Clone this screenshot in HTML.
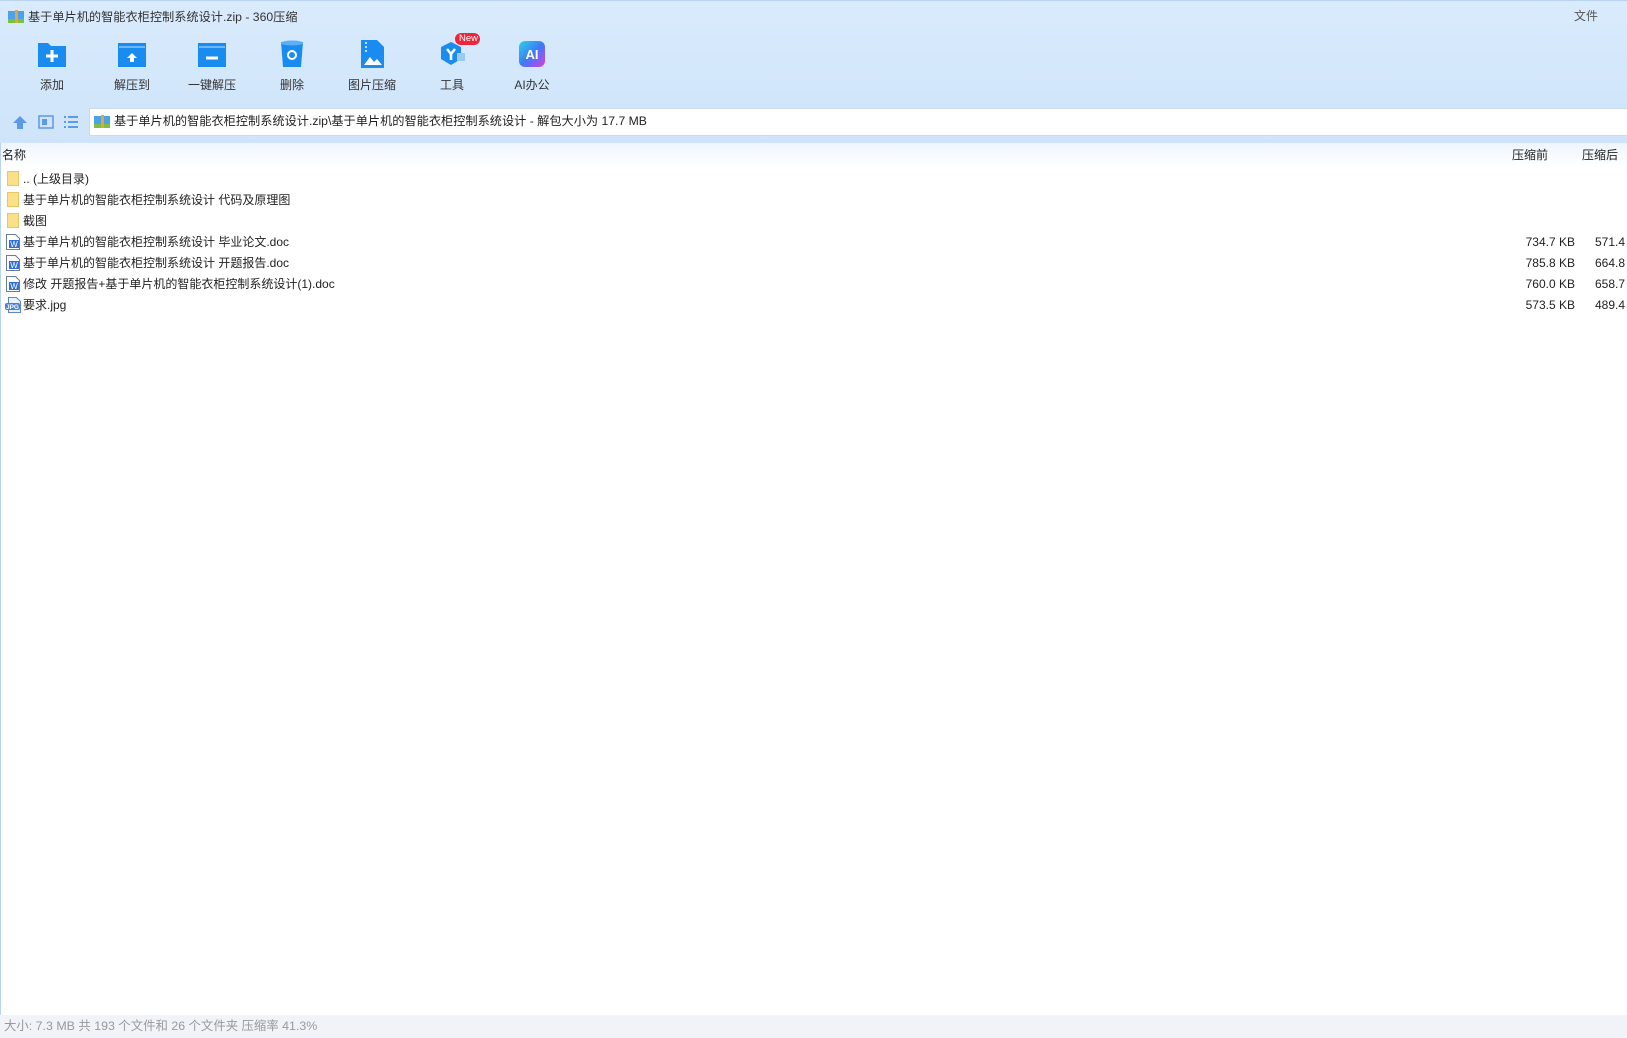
<!DOCTYPE html>
<html><head><meta charset="utf-8"><style>
*{margin:0;padding:0;box-sizing:border-box}
body{width:1627px;height:1038px;overflow:hidden;background:#fff;font-family:"Liberation Sans","Noto Sans CJK SC",sans-serif;font-size:12px;color:#222;position:relative}
.top{position:absolute;left:0;top:0;width:1627px;height:143px;background:linear-gradient(#d9ebfc,#cfe4fa);border-top:1px solid #b8d4f0}
.title{position:absolute;left:28px;top:7px;font-size:12.2px;color:#333;line-height:18px}
.tb{position:absolute;top:38px;width:80px;text-align:center;font-size:12px;color:#333}
.tb svg{display:block;margin:0 auto 7px}
.addr{position:absolute;left:89px;top:107px;right:0;height:28px;background:#fff;border:1px solid #c7dcf2;border-right:none}
.addr span{position:absolute;left:24px;top:-1px;line-height:26px;font-size:12.2px}
.hdr{position:absolute;left:0;top:143px;width:1627px;height:24px;background:linear-gradient(#eef5fd,#fff)}
.hdr div{position:absolute;top:0;line-height:24px;font-size:12px}
.row{position:absolute;left:0;height:21px;width:1627px;line-height:21px}
.row .ic{position:absolute;left:7px;top:2px}
.row .n{position:absolute;left:23px;top:0}
.row .a{position:absolute;right:52px;top:0}
.row .b{position:absolute;left:1595px;top:0}
.status{position:absolute;left:0;top:1015px;width:1627px;height:23px;background:#f1f3f8;color:#999;font-size:12.4px;line-height:23px;padding:0 4px}
.lb{position:absolute;left:0;top:143px;width:1px;height:872px;background:#b8d4f0}
</style></head><body>
<div class="top">
<svg style="position:absolute;left:8px;top:9px" width="16" height="14"><rect x="0" y="1" width="16" height="12" fill="#4aa3e8"/><rect x="0" y="9" width="16" height="4" fill="#7bc043"/><rect x="7" y="0" width="3" height="13" fill="#e8a33a"/></svg>
<div class="title">基于单片机的智能衣柜控制系统设计.zip - 360压缩</div>
<div style="position:absolute;left:1574px;top:6px;font-size:12px;color:#555">文件</div>
<div class="tb" style="left:12px"><svg width="32" height="30"><path d="M2 4h10l3 3h15v21H2z" fill="#1a8cf0"/><path d="M16 11v12M10 17h12" stroke="#fff" stroke-width="3"/></svg>添加</div>
<div class="tb" style="left:92px"><svg width="32" height="30"><path d="M2 4h28v24H2z" fill="#1a8cf0"/><path d="M3 8h26" stroke="#bfe0ff"/><path d="M16 14l-5 5h3v4h4v-4h3z" fill="#fff"/></svg>解压到</div>
<div class="tb" style="left:172px"><svg width="32" height="30"><path d="M2 4h28v24H2z" fill="#1a8cf0"/><path d="M3 8h26" stroke="#bfe0ff"/><path d="M10 19h12" stroke="#fff" stroke-width="3"/></svg>一键解压</div>
<div class="tb" style="left:252px"><svg width="32" height="30"><path d="M5 3h22l-2 25H7z" fill="#1a8cf0"/><ellipse cx="16" cy="4" rx="11" ry="2.5" fill="#5bb0f8"/><circle cx="16" cy="16" r="4" fill="none" stroke="#fff" stroke-width="2"/></svg>删除</div>
<div class="tb" style="left:332px"><svg width="32" height="30"><path d="M5 1h16l7 7v21H5z" fill="#1a8cf0"/><path d="M8 26l6-8 4 5 3-3 5 6z" fill="#fff"/><path d="M10 3v10" stroke="#bfe0ff" stroke-dasharray="2 2" stroke-width="2"/></svg>图片压缩</div>
<div class="tb" style="left:412px"><svg width="34" height="30"><path d="M16 3l10 5v12l-10 6-10-6V8z" fill="#1a8cf0"/><rect x="22" y="14" width="8" height="8" fill="#9ccaf5"/><path d="M12 10l4 5 4-5M16 15v6" stroke="#fff" stroke-width="2.5" fill="none"/></svg>工具</div>
<div style="position:absolute;left:455px;top:32px;background:#f0243a;color:#fff;border-radius:7px;font-size:9.5px;padding:0 4px;height:12px;line-height:12px;width:25px;text-align:center">New</div>
<div class="tb" style="left:492px"><svg width="32" height="30"><defs><linearGradient id="g" x1="0" y1="0" x2="1" y2="1"><stop offset="0" stop-color="#2cd3e6"/><stop offset=".5" stop-color="#3d7bf5"/><stop offset="1" stop-color="#d63ee8"/></linearGradient></defs><rect x="3" y="2" width="26" height="26" rx="6" fill="url(#g)"/><text x="16" y="20" text-anchor="middle" fill="#fff" font-size="13" font-weight="bold" font-family="Liberation Sans">AI</text></svg>AI办公</div>
<svg style="position:absolute;left:12px;top:114px" width="16" height="14"><path d="M8 1l7 7h-4v6H5V8H1z" fill="#5a9ae8"/></svg>
<svg style="position:absolute;left:38px;top:114px" width="16" height="14"><rect x="1" y="1" width="14" height="12" fill="none" stroke="#5a9ae8" stroke-width="1.5"/><rect x="4" y="4" width="5" height="6" fill="#5a9ae8"/></svg>
<svg style="position:absolute;left:63px;top:114px" width="16" height="14"><path d="M1 2h2M1 7h2M1 12h2M5 2h10M5 7h10M5 12h10" stroke="#5a9ae8" stroke-width="2"/></svg>
<div class="addr"><svg style="position:absolute;left:4px;top:6px" width="16" height="14"><rect x="0" y="1" width="16" height="12" fill="#4aa3e8"/><rect x="0" y="9" width="16" height="4" fill="#7bc043"/><rect x="7" y="0" width="3" height="13" fill="#e8a33a"/></svg><span>基于单片机的智能衣柜控制系统设计.zip\基于单片机的智能衣柜控制系统设计 - 解包大小为 17.7 MB</span></div>
</div>
<div class="hdr"><div style="left:2px">名称</div><div style="left:1512px">压缩前</div><div style="left:1582px">压缩后</div></div>
<div class="lb"></div>
<div class="row" style="top:169px"><svg class="ic" width="13" height="16"><rect x=".5" y=".5" width="11" height="14" fill="#fbe08a" stroke="#e8c660"/></svg><div class="n">.. (上级目录)</div></div>
<div class="row" style="top:190px"><svg class="ic" width="13" height="16"><rect x=".5" y=".5" width="11" height="14" fill="#fbe08a" stroke="#e8c660"/></svg><div class="n">基于单片机的智能衣柜控制系统设计 代码及原理图</div></div>
<div class="row" style="top:211px"><svg class="ic" width="13" height="16"><rect x=".5" y=".5" width="11" height="14" fill="#fbe08a" stroke="#e8c660"/></svg><div class="n">截图</div></div>
<div class="row" style="top:232px"><svg class="ic" style="left:6px" width="15" height="16"><path d="M.5.5h9l4 4v11H.5z" fill="#fff" stroke="#6a7c94"/><rect x="3" y="6" width="10" height="8" fill="#2f6fd6"/><text x="8" y="13" text-anchor="middle" font-size="8" fill="#fff" font-family="Liberation Sans">W</text></svg><div class="n">基于单片机的智能衣柜控制系统设计 毕业论文.doc</div><div class="a">734.7 KB</div><div class="b">571.4</div></div>
<div class="row" style="top:253px"><svg class="ic" style="left:6px" width="15" height="16"><path d="M.5.5h9l4 4v11H.5z" fill="#fff" stroke="#6a7c94"/><rect x="3" y="6" width="10" height="8" fill="#2f6fd6"/><text x="8" y="13" text-anchor="middle" font-size="8" fill="#fff" font-family="Liberation Sans">W</text></svg><div class="n">基于单片机的智能衣柜控制系统设计 开题报告.doc</div><div class="a">785.8 KB</div><div class="b">664.8</div></div>
<div class="row" style="top:274px"><svg class="ic" style="left:6px" width="15" height="16"><path d="M.5.5h9l4 4v11H.5z" fill="#fff" stroke="#6a7c94"/><rect x="3" y="6" width="10" height="8" fill="#2f6fd6"/><text x="8" y="13" text-anchor="middle" font-size="8" fill="#fff" font-family="Liberation Sans">W</text></svg><div class="n">修改 开题报告+基于单片机的智能衣柜控制系统设计(1).doc</div><div class="a">760.0 KB</div><div class="b">658.7</div></div>
<div class="row" style="top:295px"><svg class="ic" style="left:5px" width="17" height="16"><path d="M3.5.5h8l4 4v11h-12z" fill="#eaf2fc" stroke="#5a86c8"/><rect x="0" y="6" width="15" height="7" rx="2" fill="#4a7fd0"/><text x="7.5" y="12" text-anchor="middle" font-size="6.5" fill="#fff" font-family="Liberation Sans" font-weight="bold">JPG</text></svg><div class="n">要求.jpg</div><div class="a">573.5 KB</div><div class="b">489.4</div></div>
<div class="status">大小: 7.3 MB 共 193 个文件和 26 个文件夹 压缩率 41.3%</div>
</body></html>
